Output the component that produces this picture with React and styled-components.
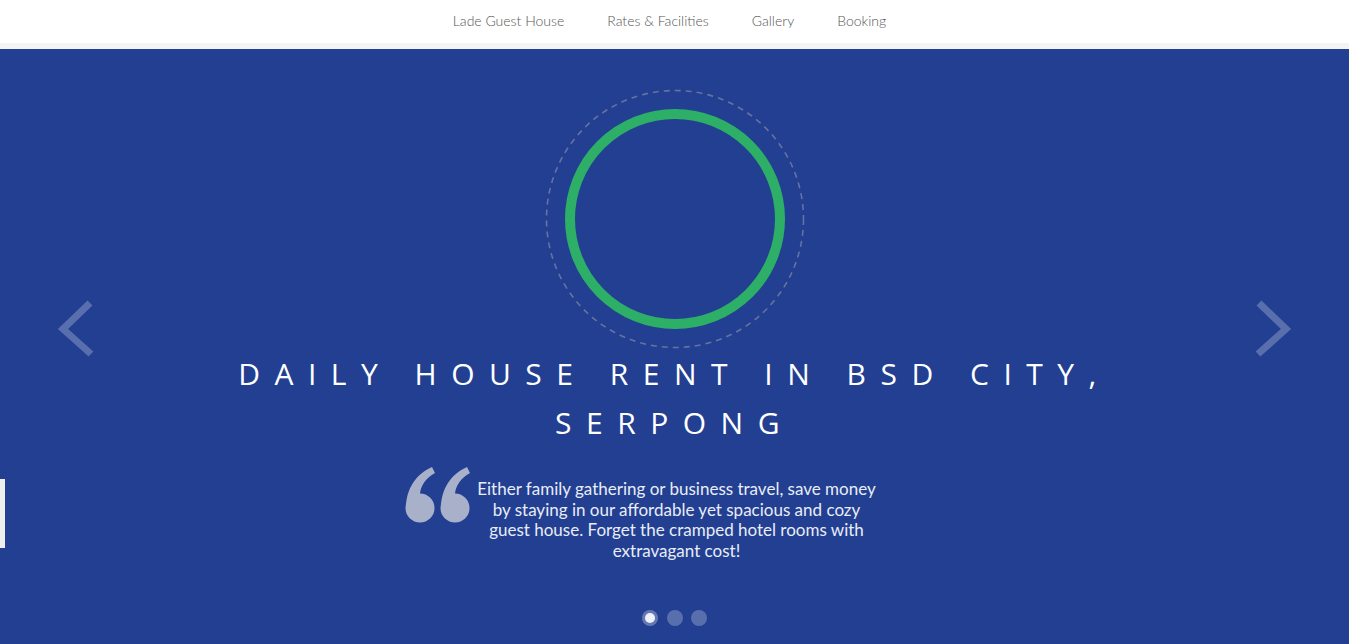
import styled, { createGlobalStyle } from 'styled-components';

const GlobalStyle = createGlobalStyle`
  html, body {
    margin: 0;
    padding: 0;
    background: #223f92;
    font-family: Lato, "Open Sans", sans-serif;
  }
`;

const navItems = ['Lade Guest House', 'Rates & Facilities', 'Gallery', 'Booking'];

const QuoteGlyph = ({ x }) => (
  <g transform={`translate(${x} 0)`}>
    <circle cx="15" cy="41" r="14.5" />
    <path d="M27 0 L30 6 C21 11 15 19 15 28 L1 41 C1 22 11 7 27 0 Z" />
  </g>
);

const App = () => {
  return (
    <>
      <GlobalStyle />
      <Header>
        <NavList>
          {navItems.map((item) => (
            <NavItem key={item}>{item}</NavItem>
          ))}
        </NavList>
      </Header>
      <Carousel>
        <SideTab />
        <Arrow $side="left">
          <svg width="40" height="60" viewBox="0 0 40 60">
            <polyline points="33,4 6,30 34,55" fill="none" stroke="currentColor" strokeWidth="7" />
          </svg>
        </Arrow>
        <Arrow $side="right">
          <svg width="40" height="60" viewBox="0 0 40 60">
            <polyline points="7,4 34,30 6,55" fill="none" stroke="currentColor" strokeWidth="7" />
          </svg>
        </Arrow>

        <Slide>
          <Rings width="260" height="260" viewBox="0 0 260 260">
            <circle cx="130" cy="130" r="128.5" fill="none" stroke="#6673a0" strokeWidth="1.6" strokeDasharray="6 5" />
            <circle cx="130" cy="130" r="105" fill="none" stroke="#2daf67" strokeWidth="10" />
          </Rings>
          <Title>Daily House Rent in BSD City, Serpong</Title>
          <QuoteBox>
            <QuoteMark width="66" height="56" viewBox="0 0 66 56">
              <QuoteGlyph x={0} />
              <QuoteGlyph x={35} />
            </QuoteMark>
            Either family gathering or business travel, save money by staying in our affordable yet spacious
            and cozy guest house. Forget the cramped hotel rooms with extravagant cost!
          </QuoteBox>
        </Slide>

        <Dots>
          <Dot $active />
          <Dot />
          <Dot />
        </Dots>
      </Carousel>
    </>
  );
};

const Header = styled.header`
  height: 40px;
  padding-bottom: 3px;
  background: #fff;
  border-bottom: 6px solid #f4f4f4;
  display: flex;
  justify-content: center;
  align-items: center;
  padding-right: 10px;
`;

const NavList = styled.nav`
  display: flex;
  gap: 43px;
`;

const NavItem = styled.a`
  font-family: Lato, sans-serif;
  font-weight: 300;
  font-size: 14px;
  color: #555;
  text-decoration: none;
  cursor: pointer;
`;

const Carousel = styled.section`
  position: relative;
  height: calc(100vh - 49px);
  background: #223f92;
  overflow: hidden;
`;

const SideTab = styled.div`
  position: absolute;
  left: 0;
  top: 430px;
  width: 5px;
  height: 69px;
  background: #eeeeee;
`;

const Arrow = styled.div`
  position: absolute;
  top: 250px;
  ${({ $side }) => ($side === 'left' ? 'left: 57px;' : 'right: 57px;')}
  color: rgba(255, 255, 255, 0.25);
  line-height: 0;
  cursor: pointer;
`;

const Slide = styled.div`
  display: flex;
  flex-direction: column;
  align-items: center;
  padding-top: 40px;
`;

const Rings = styled.svg`
  display: block;
`;

const Title = styled.h1`
  margin: 0;
  max-width: 960px;
  font-family: "Open Sans", sans-serif;
  font-weight: 400;
  font-size: 30px;
  line-height: 49px;
  letter-spacing: 14.5px;
  text-transform: uppercase;
  text-align: center;
  color: #fff;
`;

const QuoteBox = styled.p`
  position: relative;
  width: 400px;
  margin: 32px 0 0;
  padding-left: 4px;
  font-family: Lato, sans-serif;
  font-size: 17px;
  line-height: 20.7px;
  text-align: center;
  color: #e9edf6;
`;

const QuoteMark = styled.svg`
  position: absolute;
  left: -68px;
  top: -12px;
  fill: #a8b0ca;
`;

const Dots = styled.div`
  position: absolute;
  left: 0;
  right: 0;
  bottom: 18px;
  display: flex;
  justify-content: center;
  gap: 8.5px;
`;

const Dot = styled.span`
  width: 16px;
  height: 16px;
  border-radius: 50%;
  background: ${({ $active }) => ($active ? 'rgba(255, 255, 255, 0.3)' : 'rgba(255, 255, 255, 0.25)')};
  display: flex;
  justify-content: center;
  align-items: center;

  &::after {
    content: '';
    display: ${({ $active }) => ($active ? 'block' : 'none')};
    width: 10px;
    height: 10px;
    border-radius: 50%;
    background: #eef1f8;
  }
`;

export default App;
